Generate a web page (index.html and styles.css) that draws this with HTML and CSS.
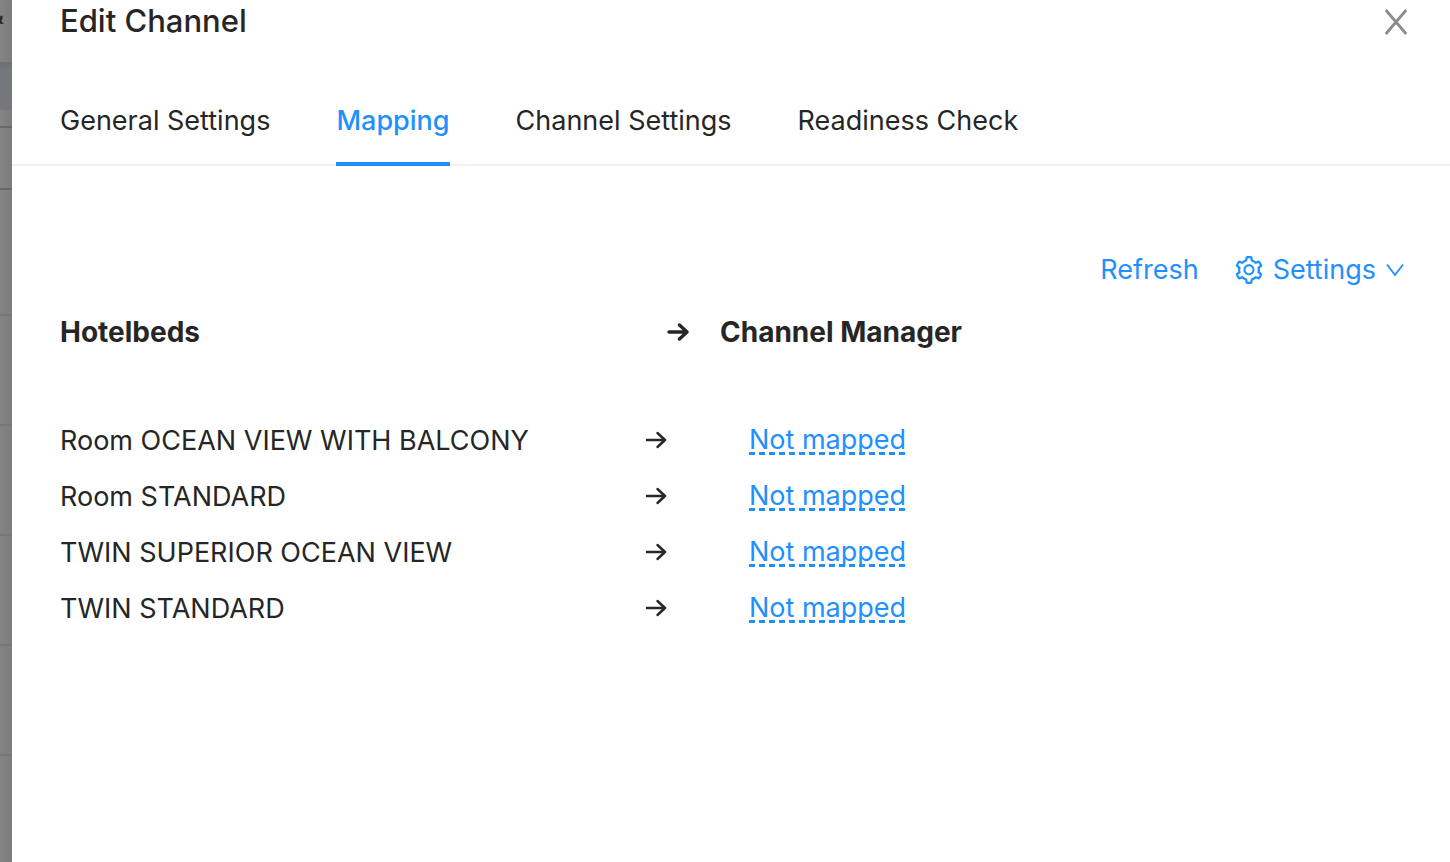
FILE: index.html
```html
<!DOCTYPE html>
<html lang="en">
<head>
<meta charset="utf-8">
<meta name="viewport" content="width=device-width, initial-scale=1">
<title>Edit Channel</title>
<link rel="stylesheet" href="styles.css">
</head>
<body>
<div class="app">
  <div class="backdrop">
    <div class="backdrop-header"><span>&amp;</span></div>
    <div class="backdrop-band"></div>
    <div class="backdrop-gap"></div>
    <div class="backdrop-head"></div>
    <div class="backdrop-row backdrop-row-first"></div>
    <div class="backdrop-row"></div>
    <div class="backdrop-row"></div>
    <div class="backdrop-row"></div>
    <div class="backdrop-row"></div>
  </div>
  <main class="drawer">
    <header class="drawer-header">
      <h1 class="title">Edit Channel</h1>
      <button class="close" type="button" aria-label="Close">
        <svg width="24" height="26" viewBox="0 0 24 26" fill="none" stroke="currentColor" stroke-width="2.8"><path d="M1.8 1L22.2 25M22.2 1L1.8 25"/></svg>
      </button>
    </header>
    <nav class="tabs" role="tablist">
      <button class="tab" type="button" role="tab">General Settings</button>
      <button class="tab tab-active" type="button" role="tab" aria-selected="true">Mapping</button>
      <button class="tab" type="button" role="tab">Channel Settings</button>
      <button class="tab" type="button" role="tab">Readiness Check</button>
    </nav>
    <section class="content">
      <div class="actions">
        <button class="action" type="button">Refresh</button>
        <button class="action" type="button">
          <svg class="gear" width="28" height="28" viewBox="64 64 896 896" fill="currentColor"><path d="M924.8 625.7l-65.5-56c3.1-19 4.700-38.400 4.700-57.800s-1.600-38.800-4.700-57.800l65.500-56a32.030 32.030 0 0 0 9.300-35.200l-.9-2.600a443.740 443.740 0 0 0-79.700-137.900l-1.800-2.100a32.120 32.120 0 0 0-35.100-9.500l-81.300 28.900c-30-24.600-63.500-44-99.700-57.600l-15.700-85a32.050 32.050 0 0 0-25.800-25.700l-2.700-.5c-52.100-9.400-106.900-9.400-159 0l-2.700.5a32.050 32.050 0 0 0-25.800 25.700l-15.800 85.400a351.860 351.860 0 0 0-99 57.400l-81.900-29.100a32 32 0 0 0-35.100 9.500l-1.800 2.100a446.020 446.020 0 0 0-79.700 137.900l-.9 2.600c-4.500 12.500-.8 26.500 9.300 35.200l66.300 56.600c-3.100 18.800-4.600 38-4.600 57.100 0 19.200 1.500 38.400 4.600 57.100L99 625.500a32.030 32.030 0 0 0-9.300 35.200l.9 2.600c18.100 50.400 44.900 96.900 79.700 137.900l1.800 2.100a32.120 32.120 0 0 0 35.100 9.500l81.900-29.100c29.800 24.500 63.100 43.900 99 57.400l15.800 85.400a32.050 32.050 0 0 0 25.800 25.700l2.700.5a449.400 449.400 0 0 0 159 0l2.700-.5a32.050 32.050 0 0 0 25.800-25.700l15.700-85a350 350 0 0 0 99.700-57.600l81.300 28.900a32 32 0 0 0 35.100-9.500l1.800-2.100c34.800-41.100 61.600-87.500 79.700-137.900l.9-2.600c4.500-12.300.8-26.300-9.300-35zM788.300 465.900c2.500 15.100 3.800 30.600 3.800 46.100s-1.300 31-3.800 46.100l-6.600 40.100 74.700 63.900a370.030 370.030 0 0 1-42.600 73.600L721 702.800l-31.400 25.800c-23.900 19.600-50.500 35-79.300 45.800l-38.100 14.300-17.900 97a377.500 377.500 0 0 1-85 0l-17.900-97.200-37.800-14.500c-28.500-10.800-55-26.200-78.700-45.700l-31.400-25.900-93.400 33.200c-17-22.900-31.200-47.600-42.600-73.600l75.500-64.500-6.500-40c-2.400-14.900-3.700-30.300-3.700-45.500 0-15.300 1.200-30.600 3.700-45.500l6.500-40-75.500-64.500c11.300-26.100 25.600-50.700 42.600-73.600l93.400 33.200 31.400-25.900c23.700-19.500 50.200-34.900 78.700-45.700l37.900-14.300 17.900-97.200c28.100-3.200 56.800-3.200 85 0l17.900 97 38.100 14.300c28.700 10.800 55.400 26.200 79.300 45.800l31.400 25.800 92.800-32.900c17 22.900 31.200 47.600 42.600 73.600L781.800 426l6.500 39.900zM512 326c-97.200 0-176 78.800-176 176s78.800 176 176 176 176-78.800 176-176-78.800-176-176-176zm79.200 255.200A111.600 111.600 0 0 1 512 614c-29.900 0-58-11.700-79.200-32.800A111.600 111.600 0 0 1 400 502c0-29.900 11.700-58 32.800-79.200C454 401.600 482.100 390 512 390c29.900 0 58 11.600 79.200 32.800A111.600 111.600 0 0 1 624 502c0 29.900-11.700 58-32.800 79.200z"/></svg>
          <span>Settings</span>
          <svg width="18" height="14" viewBox="0 0 18 14" fill="none" stroke="currentColor" stroke-width="1.8"><path d="M1 1.500L9 12L17 1.500"/></svg>
        </button>
      </div>
      <div class="mapping-head">
        <strong>Hotelbeds</strong>
        <svg width="22" height="18" viewBox="0 0 22 18" fill="none" stroke="currentColor" stroke-width="3.400" stroke-linecap="round" stroke-linejoin="round"><path d="M2 9H20M12.500 2L20 9L12.500 16"/></svg>
        <strong>Channel Manager</strong>
      </div>
      <ul class="mappings">
        <li class="mapping"><span>Room OCEAN VIEW WITH BALCONY</span><svg class="arrow" width="22" height="18" viewBox="0 0 22 18"><path d="M2 9H20M12.500 2L20 9L12.500 16"/></svg><button class="map-link" type="button">Not mapped</button></li>
        <li class="mapping"><span>Room STANDARD</span><svg class="arrow" width="22" height="18" viewBox="0 0 22 18"><path d="M2 9H20M12.500 2L20 9L12.500 16"/></svg><button class="map-link" type="button">Not mapped</button></li>
        <li class="mapping"><span>TWIN SUPERIOR OCEAN VIEW</span><svg class="arrow" width="22" height="18" viewBox="0 0 22 18"><path d="M2 9H20M12.500 2L20 9L12.500 16"/></svg><button class="map-link" type="button">Not mapped</button></li>
        <li class="mapping"><span>TWIN STANDARD</span><svg class="arrow" width="22" height="18" viewBox="0 0 22 18"><path d="M2 9H20M12.500 2L20 9L12.500 16"/></svg><button class="map-link" type="button">Not mapped</button></li>
      </ul>
    </section>
  </main>
</div>
</body>
</html>
```
FILE: styles.css
```css
* { box-sizing: border-box; }
body {
  margin: 0;
  font-family: Inter, "Liberation Sans", sans-serif;
  font-size: 27px;
  line-height: 44px;
  color: #262626;
  background: #fff;
}
button {
  font: inherit;
  color: inherit;
  background: none;
  border: 0;
  padding: 0;
  cursor: pointer;
}
svg { display: block; flex: none; }
.app { display: flex; min-height: 100vh; }

.backdrop {
  flex: none;
  width: 12px;
  overflow: hidden;
  background: linear-gradient(to right, #848484, #7c7c7c);
}
.backdrop-header {
  display: flex;
  justify-content: flex-end;
  height: 62px;
  padding-right: 8px;
  font-size: 24px;
  line-height: 32px;
  font-weight: 500;
}
.backdrop-band { height: 48px; background: linear-gradient(#6f7074, #76777a 8px); }
.backdrop-gap { height: 18px; border-bottom: 2px solid #686868; }
.backdrop-head { height: 62px; border-bottom: 2px solid #686868; }
.backdrop-row { height: 110px; border-bottom: 2px solid #777; }
.backdrop-row-first { height: 126px; }

.drawer { flex: 1; min-width: 0; }
.drawer-header {
  display: flex;
  justify-content: space-between;
  align-items: center;
  padding: 0 42px 0 48px;
}
.title { margin: 0; padding-bottom: 2px; font-size: 31px; font-weight: 500; line-height: 42px; }
.close { color: #8c8c8c; }
.tabs {
  display: flex;
  gap: 66px;
  margin-top: 32px;
  padding: 0 48px;
  border-bottom: 2px solid #f0f0f0;
}
.tab {
  height: 90px;
  margin-bottom: -2px;
  padding-top: 4px;
  border-bottom: 4px solid transparent;
  white-space: nowrap;
}
.tab-active { color: #1f90ff; font-weight: 500; border-bottom-color: #1f90ff; }

.content { padding: 82px 46px 48px 48px; }
.actions { display: flex; justify-content: flex-end; gap: 36px; color: #1f90ff; }
.action { display: flex; align-items: center; gap: 10px; }
.mapping-head {
  display: grid;
  grid-template-columns: 607fr 53px 684fr;
  align-items: center;
  margin-top: 18px;
  font-size: 28px;
}
.mapping-head strong { font-weight: 700; }
.mappings { margin: 58px 0 0; padding: 0; list-style: none; }
.mapping {
  display: grid;
  grid-template-columns: 585fr 104px 655fr;
  align-items: center;
  height: 56px;
}
.mapping span { padding-top: 2px; }
.arrow {
  fill: none;
  stroke: currentColor;
  stroke-width: 2.4;
  stroke-linecap: round;
  stroke-linejoin: round;
}
.map-link {
  justify-self: start;
  height: 30px;
  line-height: 30px;
  color: #1f90ff;
  background: repeating-linear-gradient(to right, #1f90ff 0 6px, transparent 6px 10px) left bottom / 100% 3px no-repeat;
}
```
